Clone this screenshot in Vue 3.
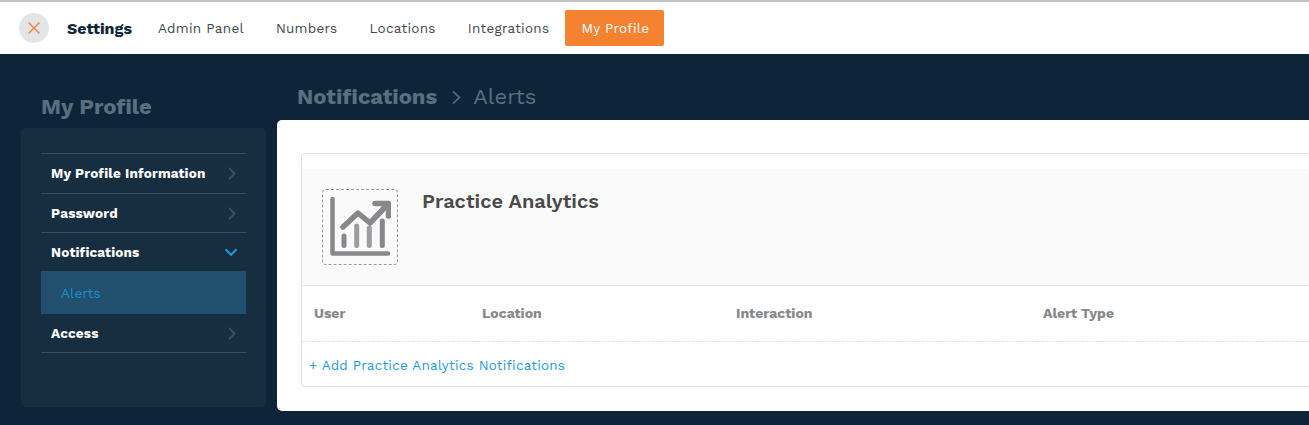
<script setup>
const tabs = ['Admin Panel', 'Numbers', 'Locations', 'Integrations']
const columns = [
  { label: 'User', width: '168px' },
  { label: 'Location', width: '254px' },
  { label: 'Interaction', width: '307px' },
  { label: 'Alert Type', width: 'auto' },
]
</script>

<template>
  <div class="page">
    <header class="topbar">
      <button class="close" aria-label="Close">
        <svg width="14" height="14" viewBox="0 0 14 14"><path d="M1.5 1.5 12.5 12.5M12.5 1.5 1.5 12.5" fill="none" stroke="#f58230" stroke-width="1.4" /></svg>
      </button>
      <strong class="brand">Settings</strong>
      <nav class="tabs">
        <a v-for="tab in tabs" :key="tab" class="tab">{{ tab }}</a>
        <a class="tab active">My Profile</a>
      </nav>
    </header>

    <div class="body">
      <aside class="side">
        <h2 class="side-title">My Profile</h2>
        <div class="side-card">
          <ul class="menu">
            <li class="row r40"><span>My Profile Information</span>
              <svg class="chev" width="9" height="13" viewBox="0 0 9 13"><path d="M2 .8 7.700 6.500 2 12.200" /></svg>
            </li>
            <li class="row r39"><span>Password</span>
              <svg class="chev" width="9" height="13" viewBox="0 0 9 13"><path d="M2 .8 7.700 6.500 2 12.200" /></svg>
            </li>
            <li class="row r38 open"><span>Notifications</span>
              <svg class="down" width="14" height="9" viewBox="0 0 14 9"><path d="M1.500 1.200 7 6.800 12.500 1.200" /></svg>
            </li>
            <li class="sub">Alerts</li>
            <li class="row r39"><span>Access</span>
              <svg class="chev" width="9" height="13" viewBox="0 0 9 13"><path d="M2 .8 7.700 6.500 2 12.200" /></svg>
            </li>
          </ul>
        </div>
      </aside>

      <main class="content">
        <div class="crumbs">
          <b>Notifications</b>
          <svg width="10" height="15" viewBox="0 0 10 15"><path d="M2 1.500 8.500 7.500 2 13.500" fill="none" stroke="#5a6f7f" stroke-width="1.7" /></svg>
          <span>Alerts</span>
        </div>
        <section class="panel">
          <div class="card">
            <div class="card-head">
              <div class="icon-box">
                <svg width="62" height="62" viewBox="0 0 62 62">
                  <g fill="none" stroke="#87888b" stroke-linecap="round" stroke-linejoin="round">
                    <path d="M3.500 3V57.500H59" stroke-width="4.500" />
                    <path d="M14 31 29 17 41 27 58 9" stroke-width="5.500" />
                    <path d="M46 7.500H59.500V20" stroke-width="5.500" />
                    <path d="M15 40V49.500M53.300 25V49.500" stroke-width="5" />
                    <path d="M27.700 30V49.500M40.300 32V49.500" stroke-width="5" opacity=".82" />
                  </g>
                </svg>
              </div>
              <h3>Practice Analytics</h3>
            </div>
            <div class="cols">
              <div v-for="c in columns" :key="c.label" class="col" :style="{ width: c.width }">{{ c.label }}</div>
            </div>
            <a class="add">+ Add Practice Analytics Notifications</a>
          </div>
        </section>
      </main>
    </div>
  </div>
</template>

<style scoped>
.page {
  width: 1309px;
  height: 425px;
  overflow: hidden;
  background: #0e2539;
  font-family: "Work Sans", Inter, "Liberation Sans", sans-serif;
  display: flex;
  flex-direction: column;
}
.topbar {
  height: 52px;
  flex: none;
  box-sizing: content-box;
  background: #fff;
  border-top: 2px solid #c4c4c4;
  display: flex;
  align-items: center;
  padding-left: 19px;
}
.close {
  width: 30px;
  height: 30px;
  border: 0;
  padding: 0;
  border-radius: 50%;
  background: #e4e5e6;
  display: flex;
  align-items: center;
  justify-content: center;
}
.brand {
  margin-left: 18px;
  width: 65px;
  white-space: nowrap;
  font-size: 16px;
  font-weight: 700;
  color: #0e2539;
}
.tabs {
  margin-left: 10px;
  display: flex;
  align-items: center;
}
.tab {
  padding: 0 16px;
  font-size: 13.500px;
  color: #42474c;
  line-height: 36px;
  letter-spacing: 0.28px;
}
.active {
  background: #f58230;
  color: #fff;
  border-radius: 2px;
  padding-right: 15px;
}
.body {
  flex: 1;
  display: flex;
  padding-left: 21px;
  min-height: 0;
}
.side {
  width: 245px;
  flex: none;
}
.side-title {
  margin: 40px 0 9px 20px;
  height: 25px;
  line-height: 25px;
  font-size: 22px;
  font-weight: 700;
  color: #5a6f7f;
}
.side-card {
  height: 279px;
  box-sizing: border-box;
  background: #172d40;
  border-radius: 5px;
  padding: 25px 20px 0;
}
.menu {
  list-style: none;
  margin: 0;
  padding: 0;
  border-top: 1px solid #3a4d5d;
}
.row {
  display: flex;
  align-items: center;
  justify-content: space-between;
  padding: 0 10px;
  color: #fff;
  font-size: 13.500px;
  font-weight: 700;
  letter-spacing: 0.19px;
  border-bottom: 1px solid #3a4d5d;
  box-sizing: border-box;
}
.r40 { height: 40px; padding-bottom: 1px; }
.r39 { height: 39px; }
.r38 { height: 38px; }
.open { border-bottom: 0; }
.chev path {
  fill: none;
  stroke: #3f5262;
  stroke-width: 1.8;
}
.down { margin-right: -2px; }
.down path {
  fill: none;
  stroke: #1e9ad6;
  stroke-width: 2;
}
.sub {
  height: 43px;
  box-sizing: border-box;
  padding: 1px 0 0 20px;
  line-height: 42px;
  background: #21506e;
  color: #1a8ed0;
  font-size: 13.500px;
  letter-spacing: 0.2px;
}
.content {
  margin-left: 11px;
  flex: 1;
  min-width: 0;
}
.crumbs {
  height: 66px;
  box-sizing: border-box;
  padding: 30px 0 0 20px;
  display: flex;
  align-items: flex-start;
  gap: 14px;
  line-height: 25px;
  font-size: 22px;
  color: #5a6f7f;
}
.crumbs b { font-weight: 700; }
.crumbs svg { margin-top: 6px; }
.crumbs span { margin-left: -2px; font-weight: 400; }
.panel {
  height: 291px;
  box-sizing: border-box;
  background: #fff;
  border-radius: 5px 0 0 5px;
  padding: 33px 0 0 24px;
}
.card {
  height: 234px;
  box-sizing: border-box;
  border: 1px solid #e0e0e0;
  border-right: 0;
  border-radius: 4px 0 0 4px;
  padding-top: 15px;
}
.card-head {
  height: 117px;
  box-sizing: border-box;
  background: #fafafa;
  border-bottom: 1px solid #e0e0e0;
  display: flex;
  padding: 20px 0 0 20px;
}
.icon-box {
  width: 76px;
  height: 76px;
  box-sizing: border-box;
  border: 1px dashed #9b9b9b;
  border-radius: 4px;
  display: flex;
  align-items: center;
  justify-content: center;
}
.card-head h3 {
  margin: 0 0 0 24px;
  font-size: 20px;
  line-height: 24px;
  font-weight: 600;
  color: #4a4a4a;
}
.cols {
  height: 56px;
  box-sizing: border-box;
  border-bottom: 1px dashed #e0e0e0;
  display: flex;
  align-items: center;
  padding: 0 0 2px 12px;
}
.col {
  flex: none;
  font-size: 14px;
  font-weight: 700;
  color: #87888b;
}
.add {
  display: block;
  padding-left: 7px;
  line-height: 46px;
  font-size: 13.500px;
  color: #1f9bd7;
  letter-spacing: 0.22px;
}
</style>
